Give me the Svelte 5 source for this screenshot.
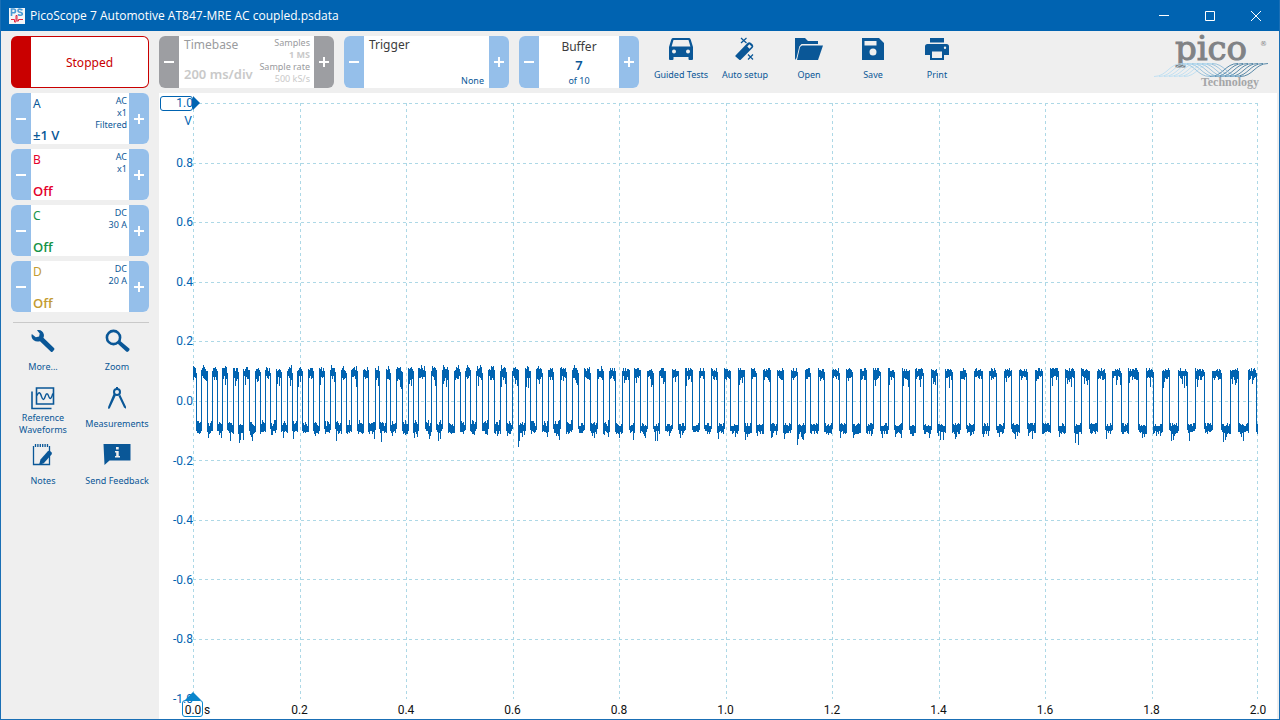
<script>
  const channels = [
    { name: 'A', value: '±1 V', info: ['AC', 'x1', 'Filtered'], tone: 'blue' },
    { name: 'B', value: 'Off', info: ['AC', 'x1'], tone: 'red' },
    { name: 'C', value: 'Off', info: ['DC', '30 A'], tone: 'green' },
    { name: 'D', value: 'Off', info: ['DC', '20 A'], tone: 'gold' }
  ];
  const topTools = [
    { label: 'Guided Tests', icon: 'car' },
    { label: 'Auto setup', icon: 'wand' },
    { label: 'Open', icon: 'folder' },
    { label: 'Save', icon: 'save' },
    { label: 'Print', icon: 'print' }
  ];
  const sideTools = [
    { label: 'More...', icon: 'wrench' },
    { label: 'Zoom', icon: 'zoom' },
    { label: 'Reference Waveforms', icon: 'waves' },
    { label: 'Measurements', icon: 'compass' },
    { label: 'Notes', icon: 'notes' },
    { label: 'Send Feedback', icon: 'feedback' }
  ];
  const yLabels = ['1.0', '0.8', '0.6', '0.4', '0.2', '0.0', '-0.2', '-0.4', '-0.6', '-0.8', '-1.0'];
  const xLabels = ['0.0', '0.2', '0.4', '0.6', '0.8', '1.0', '1.2', '1.4', '1.6', '1.8', '2.0'];

  // Trace space: 1065 sample columns by 596 rows; 0 V lies on row 298.
  const COLS = 1065;
  const ROWS = 596;
  // Columns at which the square wave changes level; it starts high.
  const edges = [
    3, 8, 14, 19, 24, 29, 34, 40, 45, 50, 56, 62, 67, 72, 77, 83, 88, 94, 99, 104, 109, 115, 120, 126, 131,
    137, 142, 148, 153, 158, 164, 170, 175, 182, 186, 193, 197, 203, 209, 215, 220, 225, 232, 238, 243, 249,
    255, 261, 267, 272, 277, 283, 289, 295, 301, 307, 313, 319, 325, 332, 337, 343, 349, 355, 360, 367, 373,
    379, 385, 391, 397, 404, 410, 416, 422, 429, 436, 441, 447, 454, 460, 466, 472, 479, 485, 492, 499, 506,
    511, 518, 524, 531, 537, 545, 551,
    558, 563, 570, 577, 584, 590, 598, 604, 612, 617, 625, 631, 639, 646, 653, 659, 667, 673, 680, 687, 695,
    701, 709, 716, 722, 730, 738, 744, 752, 759, 767, 773, 781, 789, 796, 803, 811, 818,
    826, 834, 842, 849, 857, 865, 872, 881, 888, 896, 904, 912, 919, 928, 935, 945, 953, 960, 969, 976, 985,
    994, 1002, 1011, 1019, 1028, 1037, 1045, 1055, 1063
  ];
  // Deep excursions of the low level, column to row.
  const dips = new Map([
    [46, 340], [50, 337], [188, 339], [325, 344], [326, 338], [329, 334], [384, 338], [464, 338], [604, 342],
    [605, 336], [609, 336], [747, 337], [750, 337], [882, 340], [885, 342], [978, 338], [980, 337], [1030, 339],
    [913, 336]
  ]);

  let seed = 7341;
  const rnd = () => {
    seed = (seed * 16807) % 2147483647;
    return seed / 2147483647;
  };

  const trace = (() => {
    let d = '';
    let high = true;
    let k = 0;
    for (let x = 0; x < COLS; x++) {
      const early = x < 420 ? 1 : 0;
      let top;
      let bottom;
      const edge = edges[k] === x;
      if (edge) {
        top = (high ? 267 : 265) + Math.floor(rnd() * 4);
        bottom = 326 + Math.floor(rnd() * 6);
        high = !high;
        k++;
      } else if (high) {
        top = 265 + Math.floor(rnd() * 4) - early * Math.floor(rnd() * 4);
        bottom = 273 + Math.floor(rnd() * 5) + (rnd() < 0.27 ? Math.floor(rnd() * 10) : 0);
      } else {
        top = 323 - Math.floor(rnd() * 4) - early * Math.floor(rnd() * 4);
        bottom = 328 + Math.floor(rnd() * 4) + (rnd() < 0.27 ? Math.floor(rnd() * 8) : 0);
      }
      if (dips.has(x) && (edge || !high)) bottom = dips.get(x);
      d += `M${x} ${top}h1V${bottom}h-1z`;
    }
    return d;
  })();
</script>

{#snippet icon(name)}
  <svg class="icon" viewBox="0 0 28 24" aria-hidden="true">
    {#if name === 'car'}
      <path fill-rule="evenodd" d="M6.2 1h15.600q1.400 0 1.900 1.400L26 10v12q0 1-1 1h-2.500q-1 0-1-1v-2h-15v2q0 1-1 1H3q-1 0-1-1V10l2.300-7.600Q4.800 1 6.200 1zM6.500 3 4.600 9.500h18.800L21.500 3zM7 12.500a2 2 0 1 0 0 4 2 2 0 1 0 0-4zm14 0a2 2 0 1 0 0 4 2 2 0 1 0 0-4z" />
    {:else if name === 'wand'}
      <path fill-rule="evenodd" d="M4.500 18.500 16.500 6q1.800-1.500 3.500 0l1.700 1.600q1.300 1.700 0 3.200L10 22.500q-1 1-2 0L4.500 19.500q-.5-.5 0-1zM18.300 7.200l-2 2.300 2.200 2.200 2.200-2.200z" />
      <path d="m10 1 5.500 5m0-5L10 6M17 17.500l5 5m0-5-5 5" fill="none" stroke="currentColor" stroke-width="1.200" />
    {:else if name === 'folder'}
      <path d="M0 1h10l3 3h10v3H6.500L4.300 9.500 1.500 21 0 23z" />
      <path d="M7 8.500h21L23 23H2L5 10z" />
    {:else if name === 'save'}
      <path fill-rule="evenodd" d="M3 1h17l5 5v17H3zM5.500 4v4.500h12V4zM14 11.500a3.500 3.500 0 1 0 0 7 3.500 3.500 0 1 0 0-7z" />
    {:else if name === 'print'}
      <path d="M7 1h14v4.500H7z" />
      <path fill-rule="evenodd" d="M4.500 7h19Q26 7 26 9.500V18h-5v5H7v-5H2V9.500Q2 7 4.500 7zM9 14.500V21h10v-6.500zM22 9.500a1.200 1.200 0 1 0 0 2.400 1.200 1.200 0 1 0 0-2.400z" />
    {:else if name === 'wrench'}
      <path d="M8 1.200c3-1 6 .6 6.800 4 .3 1.300.1 2.600-.4 3.600L25 19q1 1 0 2l-1.300 1.500q-1 1-2 0L11 12.200C7 13.500 3.500 11.500 2.600 8c-.2-1-.1-2 .2-3l4 3.300 3.300-.7.600-3z" />
    {:else if name === 'zoom'}
      <circle cx="10.500" cy="8.500" r="6.600" fill="none" stroke="currentColor" stroke-width="2.600" />
      <path d="m14.500 14.500 2.500-2.800L26.200 19.500q.8 1 0 2l-1 1q-1 .8-2 0z" />
    {:else if name === 'waves'}
      <path d="M7.500 2h17v16h-17zM3 5.500v17h19.500" fill="none" stroke="currentColor" stroke-width="1.600" />
      <path d="M8 9.500q2.500-6 4.500 1 2 6 3.700 0 1.700-5.500 3.600 0 2 5 4-3" fill="none" stroke="currentColor" stroke-width="1.400" />
    {:else if name === 'compass'}
      <path d="M13 1h2v2h-2zM10.500 8l2.300 1.500L6.700 22.500 5 22.800l.2-2zM15.500 10l1.800-1.300L23 20.800v2L21 21.500z" />
      <circle cx="14" cy="6" r="3" fill="none" stroke="currentColor" stroke-width="2" />
    {:else if name === 'notes'}
      <path d="M4.500 3v18.500h16V3" fill="none" stroke="currentColor" stroke-width="1.300" />
      <path d="M6.500 1v3m2.400-3v3m2.400-3v3m2.400-3v3m2.400-3v3m2.400-3v3" fill="none" stroke="currentColor" stroke-width="1.300" />
      <path d="m10 22 1.500-5.500 7.500-8.500q1.200-.8 2.400.3l1 1q1 1.100.1 2.200l-7.700 8.700z" />
    {:else if name === 'feedback'}
      <path fill-rule="evenodd" d="M.5 1h27v16.500H6.500L1.500 22zM13 4v2.600h2.700V4zm-1 4v1.500h1.200V13H12v1.500h5V13h-1.300V8z" />
    {/if}
  </svg>
{/snippet}

{#snippet step(kind, what)}
  <button class="step {kind}" aria-label="{kind === 'minus' ? 'Decrease' : 'Increase'} {what}">
    <svg viewBox="0 0 10 10" aria-hidden="true">
      <path d={kind === 'minus' ? 'M0 4h10v2H0z' : 'M0 4h4V0h2v4h4v2H6v4H4V6H0z'} />
    </svg>
  </button>
{/snippet}

<div class="window">
  <header class="titlebar">
    <svg class="appicon" viewBox="0 0 16 16" aria-hidden="true">
      <path fill="#f4f6f8" d="M0 0h16v16H0z" />
      <path d="M2.500 8V1h2q2 0 2 1.900t-2 1.900h-2M13.500 2Q9 0 9 2.500 9 4 11.200 4.300 13.500 4.800 13.300 6.300 12.500 8 8.800 6.800" fill="none" stroke="#4a9ad4" stroke-width="1.600" />
      <path d="M2 11.500h3.500V14H7V7.500h1V13h1.500v-1.500H14" fill="none" stroke="#e2233f" />
    </svg>
    <h1>PicoScope 7 Automotive AT847-MRE AC coupled.psdata</h1>
    <button class="win" aria-label="Minimize"><svg viewBox="0 0 12 12"><path d="M1 5.500h10" /></svg></button>
    <button class="win" aria-label="Maximize"><svg viewBox="0 0 12 12"><path d="M1.500 1.500h9v9h-9z" /></svg></button>
    <button class="win" aria-label="Close"><svg viewBox="0 0 12 12"><path d="m1 1 10 10M11 1 1 11" /></svg></button>
  </header>

  <div class="toolbar">
    <button class="stopped">Stopped</button>

    <section class="card timebase" aria-label="Timebase">
      {@render step('minus', 'timebase')}
      <div class="body">
        <div class="main"><span>Timebase</span><strong>200 ms/div</strong></div>
        <div class="info"><span>Samples</span><b>1 MS</b><span>Sample rate</span><i>500 kS/s</i></div>
      </div>
      {@render step('plus', 'timebase')}
    </section>

    <section class="card trigger" aria-label="Trigger">
      {@render step('minus', 'trigger')}
      <div class="body"><span>Trigger</span><small>None</small></div>
      {@render step('plus', 'trigger')}
    </section>

    <section class="card buffer" aria-label="Buffer">
      {@render step('minus', 'buffer')}
      <div class="body"><span>Buffer</span><strong>7</strong><small>of 10</small></div>
      {@render step('plus', 'buffer')}
    </section>

    <nav class="tools" aria-label="Actions">
      {#each topTools as tool}
        <button class="tool">{@render icon(tool.icon)}<span>{tool.label}</span></button>
      {/each}
    </nav>

    <svg class="logo" viewBox="0 0 116 56" role="img" aria-label="Pico Technology">
      <text class="pico" x="57" y="24" text-anchor="middle">pico</text>
      <text class="reg" x="106" y="10">®</text>
      {#each [0, 1, 2, 3, 4, 5, 6] as i}
        <path class="w1" d="M{i * 5} 40.500C{13 + i * 5} 40.500 {15 + i * 5} 27.500 {28 + i * 5} 27.500" />
        <path class="w2" d="M{28 + i * 5} 27.500C{41 + i * 5} 27.500 {43 + i * 5} 40.500 {56 + i * 5} 40.500" />
        <path class="w3" d="M{56 + i * 5} 40.500C{69 + i * 5} 40.500 {71 + i * 5} 27.500 {84 + i * 5} 27.500" />
      {/each}
      <text class="tech" x="76" y="50" text-anchor="middle">Technology</text>
    </svg>
  </div>

  <main>
    <aside>
      <div class="channels">
        {#each channels as ch}
          <section class="card channel {ch.tone}" aria-label="Channel {ch.name}">
            {@render step('minus', `channel ${ch.name}`)}
            <div class="body">
              <div class="main"><span>{ch.name}</span><strong>{ch.value}</strong></div>
              <div class="info">{#each ch.info as line}<span>{line}</span>{/each}</div>
            </div>
            {@render step('plus', `channel ${ch.name}`)}
          </section>
        {/each}
      </div>
      <hr />
      <nav class="sidetools" aria-label="Tools">
        {#each sideTools as tool}
          <button class="tool">{@render icon(tool.icon)}<span>{tool.label}</span></button>
        {/each}
      </nav>
    </aside>

    <div class="scope">
      <div class="yaxis">
        {#each yLabels as label, i}
          <span class:handle={i === 0}>{label}</span>
        {/each}
        <em>V</em>
      </div>
      <svg class="plot" viewBox="0 0 {COLS} {ROWS}" preserveAspectRatio="none" role="img" aria-label="Channel A waveform">
        {#each xLabels as _, i}
          <path class="grid" d="M{i * 106.5 + (i === 10 ? -0.5 : 0.5)} 0V{ROWS}" />
          <path class="grid" d="M0 {i * 59.55 + 0.5}H{COLS}" />
        {/each}
        <path class="trace" d={trace} />
      </svg>
      <div class="xaxis">
        {#each xLabels as label, i}
          <span class:handle={i === 0}>{label}{#if i === 0}<em>s</em>{/if}</span>
        {/each}
      </div>
    </div>
  </main>
</div>

<style>
  :global(body) { margin: 0; }
  *, *::before, *::after { box-sizing: border-box; }
  button {
    margin: 0;
    padding: 0;
    border: 0;
    background: none;
    font: inherit;
    color: inherit;
  }
  .window {
    display: flex;
    flex-direction: column;
    min-height: 100vh;
    border: 1px solid #1a6fb5;
    border-top: 0;
    background: #efefef;
    color: #0a5797;
    font: 12px/16px 'Noto Sans', 'Open Sans', sans-serif;
  }
  .titlebar {
    display: flex;
    align-items: center;
    height: 31px;
    padding-left: 8px;
    background: #0063b1;
    color: #fff;
  }
  .appicon { width: 16px; height: 16px; }
  h1 {
    flex: 1;
    margin: 0 0 0 5px;
    font: 12px/16px 'Open Sans', sans-serif;
    white-space: nowrap;
  }
  .win {
    display: grid;
    place-items: center;
    width: 46px;
    height: 31px;
  }
  .win svg { width: 12px; height: 12px; fill: none; stroke: #fff; }

  .toolbar {
    display: flex;
    gap: 10px;
    height: 62px;
    padding: 5px 9px 5px 10px;
  }
  .stopped {
    width: 138px;
    height: 52px;
    padding-top: 2px;
    border: 1px solid #c90000;
    border-left-width: 20px;
    border-radius: 6px;
    background: #fff;
    color: #c90000;
  }
  .card {
    display: flex;
    height: 52px;
    border-radius: 6px;
    overflow: hidden;
    background: #fff;
  }
  .step {
    display: grid;
    place-items: center;
    flex: none;
    width: 20px;
    background: #95bfea;
  }
  .step svg { width: 10px; height: 10px; fill: #fff; }
  .body { display: flex; flex: 1; min-width: 0; }
  .main { display: flex; flex-direction: column; justify-content: space-between; white-space: nowrap; }
  .main strong { font-size: 13px; font-weight: 600; }
  .info {
    display: flex;
    flex: 1;
    flex-direction: column;
    align-items: flex-end;
    padding-right: 2px;
    font-size: 9px;
    line-height: 12px;
    white-space: nowrap;
  }
  .timebase { width: 175px; color: #9a9b9e; }
  .timebase .step { background: #9d9ea2; }
  .timebase .body { padding: 1px 4px 6px 5px; }
  .timebase .main { width: 70px; }
  .timebase .info { padding: 0; }
  .timebase strong, .timebase b, .timebase i { color: #c9c9c9; font-style: normal; }
  .trigger { width: 165px; }
  .trigger .body { flex-direction: column; justify-content: space-between; padding: 1px 5px 1px; }
  .trigger .body span, .buffer .body span { color: #3c3c3c; }
  small { font-size: 9px; line-height: 12px; }
  .trigger small { align-self: flex-end; }
  .buffer { width: 120px; }
  .buffer .body { flex-direction: column; align-items: center; padding-top: 3px; }
  .buffer strong { font-size: 13px; font-weight: 600; line-height: 20px; }

  .tools { display: flex; flex: 1; }
  .tool {
    display: flex;
    flex-direction: column;
    align-items: center;
    font-size: 9px;
    line-height: 12px;
  }
  .tools .tool { width: 64px; padding-top: 1px; gap: 8px; }
  .icon { flex: none; width: 28px; height: 24px; fill: currentColor; }
  .logo { flex: none; width: 116px; height: 56px; overflow: visible; }
  .pico { font: 34px 'DejaVu Serif', serif; fill: #808285; stroke: #808285; }
  .reg { font: 7px 'DejaVu Sans', sans-serif; fill: #808285; }
  .tech { font: bold 12px 'Liberation Serif', serif; fill: #a5a6a8; }
  .w1, .w2, .w3 { fill: none; stroke-width: 0.8; }
  .w1 { stroke: #b5dcf3; }
  .w2 { stroke: #86b7d7; }
  .w3 { stroke: #326f96; }

  main { display: flex; flex: 1; }
  aside { flex: none; width: 158px; }
  .channels { display: flex; flex-direction: column; gap: 5px; padding: 0 10px; }
  .channel { height: 51px; }
  .channel .body { padding: 2px 0 1px 2px; }
  .channel .main { padding-top: 1px; }
  .channel .main strong { font-family: 'Open Sans', sans-serif; }
  .red .main { color: #e4002b; }
  .green .main { color: #159247; }
  .gold .main { color: #c39b32; }
  hr { margin: 10px 10px 0 12px; border: 0; border-top: 1px solid #c9c9c9; }
  .sidetools {
    display: grid;
    grid-template-columns: 74px 74px;
    grid-auto-rows: 57px;
    padding: 6px 5px 0;
  }
  .sidetools .tool span { display: flex; flex: 1; align-items: center; max-height: 28px; }

  .scope {
    display: grid;
    flex: 1;
    grid-template: 1fr 20px / 34px 1fr;
    margin-right: 2px;
    padding: 10px 19px 0 0;
    background: #fff;
    font-family: Roboto, sans-serif;
  }
  .yaxis {
    position: relative;
    display: flex;
    flex-direction: column;
    justify-content: space-between;
    align-items: flex-end;
    color: #0063b1;
  }
  .yaxis span { display: flex; align-items: center; height: 0; }
  .yaxis em { position: absolute; top: 10px; right: 1px; font-style: normal; }
  .yaxis .handle { position: relative; z-index: 1; }
  .yaxis .handle::before {
    content: '';
    position: absolute;
    top: -7px;
    right: 0;
    width: 33px;
    height: 15px;
    border: 1px solid #0063b1;
    border-radius: 3px;
  }
  .yaxis .handle::after {
    content: '';
    position: absolute;
    top: -7px;
    left: 100%;
    border: 7px solid transparent;
    border-left-color: #0063b1;
    border-right: 0;
  }
  .plot { display: block; width: 100%; height: 100%; min-height: 0; contain: size; shape-rendering: crispEdges; }
  .grid { fill: none; stroke: #add8e6; stroke-dasharray: 3 3; vector-effect: non-scaling-stroke; }
  .trace { fill: #0063b1; }
  .xaxis {
    grid-column: 2;
    display: flex;
    justify-content: space-between;
    padding-top: 3px;
    color: #111;
  }
  .xaxis span { position: relative; display: flex; justify-content: center; width: 0; height: 16px; }
  .xaxis em { position: absolute; left: 11px; font-style: normal; }
  .xaxis .handle::before {
    content: '';
    position: absolute;
    top: -2px;
    left: -11px;
    width: 21px;
    height: 17px;
    border: 1px solid #0a86cc;
    border-radius: 3px;
  }
  .xaxis .handle::after {
    content: '';
    position: absolute;
    top: -10px;
    left: -8px;
    border: 8px solid transparent;
    border-bottom-color: #0a86cc;
    border-top: 0;
  }
</style>
